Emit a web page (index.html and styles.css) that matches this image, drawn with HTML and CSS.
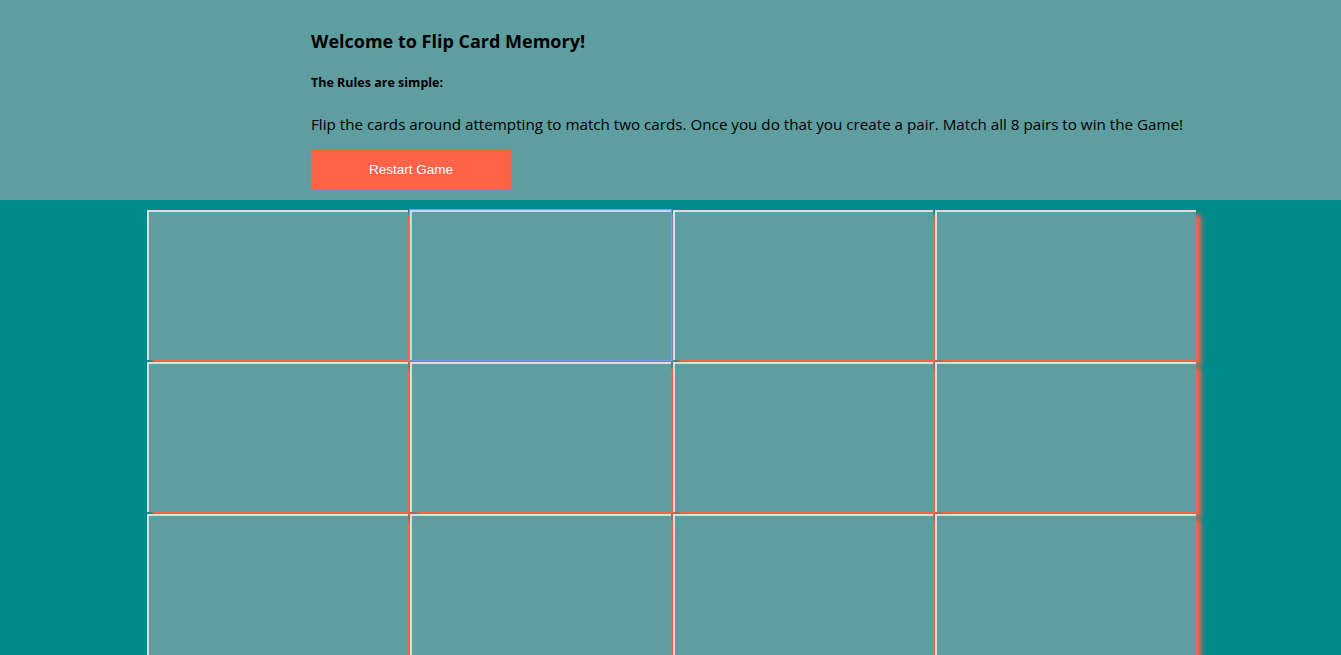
FILE: index.html
```html
<!DOCTYPE html>
<html lang="en">
<head>
<meta charset="utf-8">
<title>Flip Card Memory</title>
<link rel="stylesheet" href="styles.css">
</head>
<body>
<header class="intro">
  <h1 class="intro-title">Welcome to Flip Card Memory!</h1>
  <h2 class="intro-sub">The Rules are simple:</h2>
  <p class="intro-text">Flip the cards around attempting to match two cards. Once you do that you create a pair. Match all 8 pairs to win the Game!</p>
  <button class="restart">Restart Game</button>
</header>
<main class="board">
  <div class="card"></div>
  <div class="card card-focus"></div>
  <div class="card"></div>
  <div class="card"></div>
  <div class="card"></div>
  <div class="card"></div>
  <div class="card"></div>
  <div class="card"></div>
  <div class="card"></div>
  <div class="card"></div>
  <div class="card"></div>
  <div class="card"></div>
</main>
</body>
</html>
```
FILE: styles.css
```css
html, body {
  margin: 0;
  padding: 0;
}
body {
  background: #008b8b;
  font-family: "Open Sans", "Noto Sans", sans-serif;
  color: #000;
  overflow: hidden;
}
.intro {
  background: #5f9ea0;
  height: 200px;
  box-sizing: border-box;
  padding: 30px 0 0 311px;
}
.intro-title {
  margin: 0;
  font-size: 18px;
  line-height: 22px;
  font-weight: 700;
}
.intro-sub {
  margin: 23px 0 0;
  font-size: 12.5px;
  line-height: 16px;
  font-weight: 700;
}
.intro-text {
  margin: 22px 0 0;
  font-size: 15.2px;
  line-height: 22px;
}
.restart {
  display: block;
  margin-top: 14px;
  width: 200px;
  height: 40px;
  border: none;
  background: #ff6347;
  color: #fff;
  font-family: "Liberation Sans", Arial, sans-serif;
  font-size: 13.5px;
  padding: 0;
}
.board {
  margin: 10px 0 0 147px;
  width: 1049px;
  display: grid;
  grid-template-columns: repeat(4, 1fr);
  column-gap: 2px;
  row-gap: 2px;
}
.card {
  height: 150px;
  background: #5f9ea0;
  border-top: 2px solid #dcdcdc;
  border-left: 2px solid #dcdcdc;
  box-sizing: border-box;
  box-shadow: 5px 5px 5px #ff6347;
}
.card-focus {
  border-color: #c4d6f6;
  outline: 1px solid #6e9ae6;
  box-shadow: 3px 3px 3px #9c83b8;
}
```
